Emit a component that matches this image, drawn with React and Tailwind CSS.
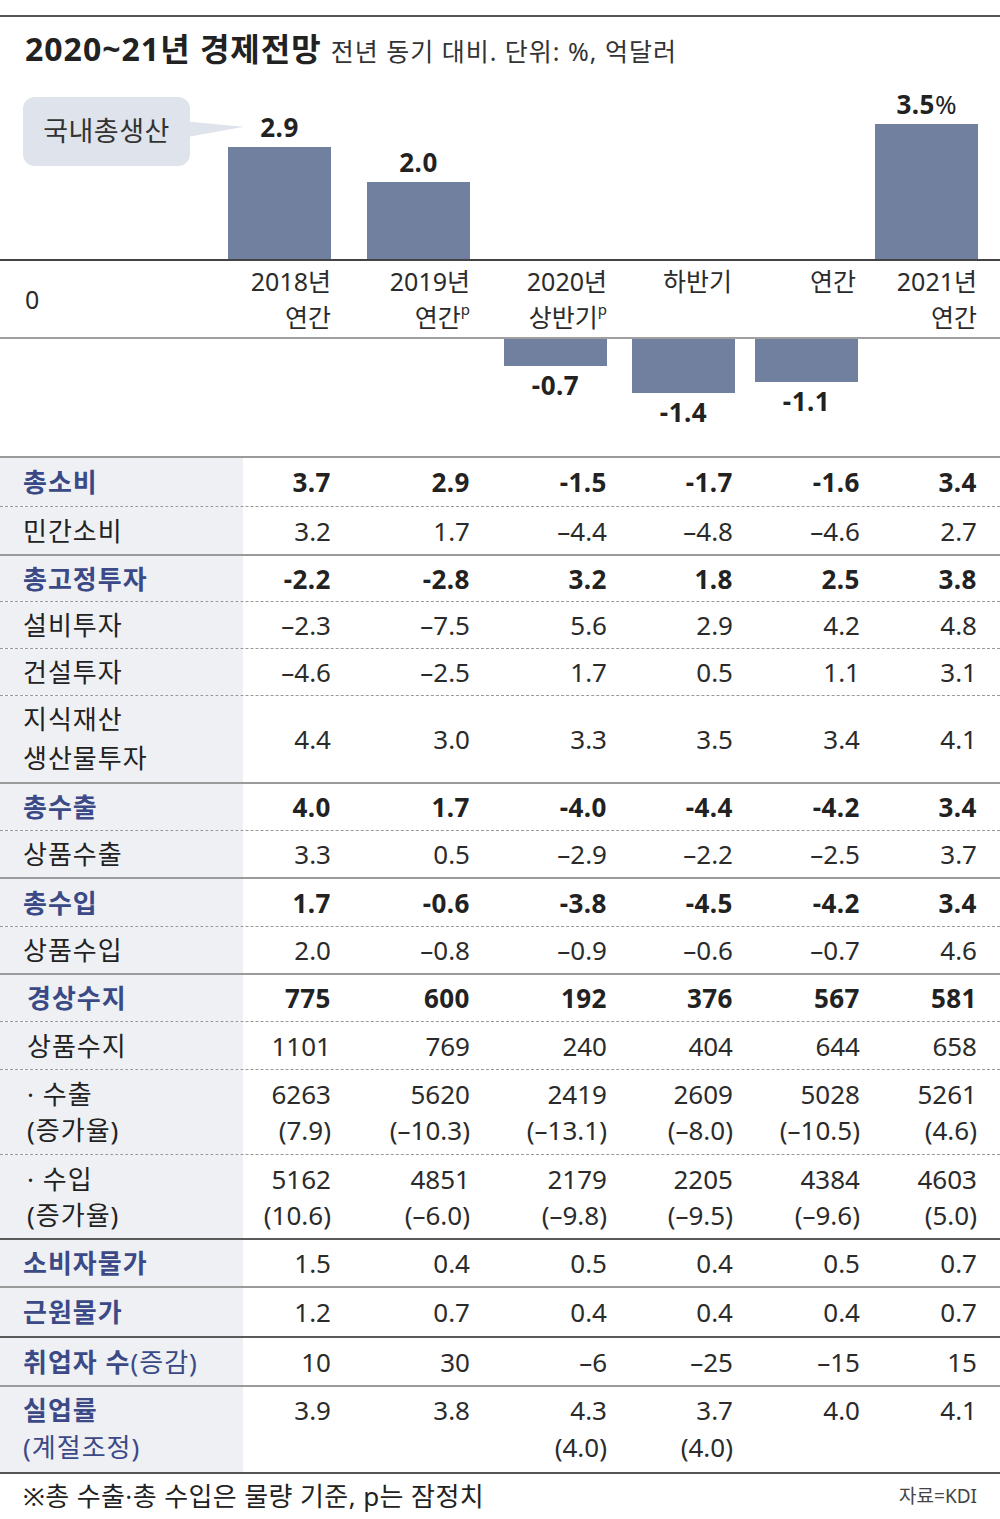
import React from 'react';

// chart bars: value, label, header lines
const bars = [
  { v: 2.9, label: '2.9', top: '2018년', bottom: '연간', pr: '' },
  { v: 2.0, label: '2.0', top: '2019년', bottom: '연간', p: true, pr: '' },
  { v: -0.7, label: '-0.7', top: '2020년', bottom: '상반기', p: true, pr: '' },
  { v: -1.4, label: '-1.4', top: '하반기', bottom: '', pr: 'pr-[3px]' },
  { v: -1.1, label: '-1.1', top: '연간', bottom: '', pr: 'pr-[2px]' },
  { v: 3.5, label: '3.5', pct: true, top: '2021년', bottom: '연간', pr: 'pr-[1px]' },
];

const CHART_COLS = 'grid grid-cols-[228px_103px_139px_137px_128px_123px_120px_22px]';
const TABLE_COLS = 'grid grid-cols-[243px_88px_139px_137px_126px_127px_117px_23px]';

const SOLID = 'border-t-2 border-solid border-[#9a9a9a]';
const DARK = 'border-t-2 border-solid border-[#5a5a5a]';
const DASH = 'border-t border-dashed border-[#9a9a9a]';

const rows = [
  { label: ['총소비'], head: true, vals: ['3.7', '2.9', '-1.5', '-1.7', '-1.6', '3.4'], h: 'h-[50px]', b: SOLID },
  { label: ['민간소비'], vals: ['3.2', '1.7', '–4.4', '–4.8', '–4.6', '2.7'], h: 'h-[48px]', b: DASH },
  { label: ['총고정투자'], head: true, vals: ['-2.2', '-2.8', '3.2', '1.8', '2.5', '3.8'], h: 'h-[47px]', b: SOLID },
  { label: ['설비투자'], vals: ['–2.3', '–7.5', '5.6', '2.9', '4.2', '4.8'], h: 'h-[47px]', b: DASH },
  { label: ['건설투자'], vals: ['–4.6', '–2.5', '1.7', '0.5', '1.1', '3.1'], h: 'h-[47px]', b: DASH },
  { label: ['지식재산', '생산물투자'], wide: true, vals: ['4.4', '3.0', '3.3', '3.5', '3.4', '4.1'], h: 'h-[87px]', b: DASH },
  { label: ['총수출'], head: true, vals: ['4.0', '1.7', '-4.0', '-4.4', '-4.2', '3.4'], h: 'h-[48px]', b: SOLID },
  { label: ['상품수출'], vals: ['3.3', '0.5', '–2.9', '–2.2', '–2.5', '3.7'], h: 'h-[47px]', b: DASH },
  { label: ['총수입'], head: true, vals: ['1.7', '-0.6', '-3.8', '-4.5', '-4.2', '3.4'], h: 'h-[49px]', b: SOLID },
  { label: ['상품수입'], vals: ['2.0', '–0.8', '–0.9', '–0.6', '–0.7', '4.6'], h: 'h-[47px]', b: DASH },
  { label: ['경상수지'], head: true, indent: true, vals: ['775', '600', '192', '376', '567', '581'], h: 'h-[48px]', b: SOLID },
  { label: ['상품수지'], indent: true, vals: ['1101', '769', '240', '404', '644', '658'], h: 'h-[48px]', b: DASH },
  {
    label: ['· 수출', '(증가율)'], indent: true, h: 'h-[85px]', b: DASH,
    vals: [['6263', '(7.9)'], ['5620', '(–10.3)'], ['2419', '(–13.1)'], ['2609', '(–8.0)'], ['5028', '(–10.5)'], ['5261', '(4.6)']],
  },
  {
    label: ['· 수입', '(증가율)'], indent: true, h: 'h-[84px]', b: DASH,
    vals: [['5162', '(10.6)'], ['4851', '(–6.0)'], ['2179', '(–9.8)'], ['2205', '(–9.5)'], ['4384', '(–9.6)'], ['4603', '(5.0)']],
  },
  { label: ['소비자물가'], navy: true, vals: ['1.5', '0.4', '0.5', '0.4', '0.5', '0.7'], h: 'h-[48px]', b: DARK },
  { label: ['근원물가'], navy: true, vals: ['1.2', '0.7', '0.4', '0.4', '0.4', '0.7'], h: 'h-[50px]', b: SOLID },
  { label: ['취업자 수'], navy: true, suffix: '(증감)', vals: ['10', '30', '–6', '–25', '–15', '15'], h: 'h-[49px]', b: DARK },
  {
    label: ['실업률', '(계절조정)'], navy: true, top: true, h: 'h-[87px]', b: SOLID,
    vals: [['3.9'], ['3.8'], ['4.3', '(4.0)'], ['3.7', '(4.0)'], ['4.0'], ['4.1']],
  },
];

const barHeight = (v) => Math.round(Math.abs(v) * 38.7);

const Callout = () => (
  <div className="relative mt-[17px] ml-[23px] w-[167px] h-[69px] rounded-[12px] bg-[#dfe3eb] flex items-center justify-center text-[27px] tracking-[0.5px] text-[#333]">
    국내총생산
    <svg className="absolute left-[166px] top-[22px]" width="56" height="20" viewBox="0 0 56 20">
      <polygon points="0,2.7 55,7.7 0,17.7" fill="#dfe3eb" />
    </svg>
  </div>
);

const BarLabel = ({ b }) => (
  <span className="text-[26px] font-bold leading-none tracking-[0.5px] text-[#222]">
    {b.label}
    {b.pct && <span className="font-normal tracking-normal">%</span>}
  </span>
);

const LabelCell = ({ row }) => {
  const color = row.head || row.navy ? 'text-[#3b4a86]' : 'text-[#222]';
  const lead = row.wide ? 'leading-[39px]' : row.top ? 'leading-[37px]' : 'leading-[36px]';
  return (
    <div
      className={`h-full bg-[#eef0f4] flex flex-col ${row.top ? 'justify-start pt-[5px]' : 'justify-center'} ${row.indent ? 'pl-[27px]' : 'pl-[23px]'} text-[26px] tracking-[1px] ${lead} ${color}`}
    >
      {row.label.map((l, i) => (
        <div key={i} className={(row.head || row.navy) && i === 0 ? 'font-bold' : ''}>
          {l}
          {row.suffix && <span className="font-normal">{row.suffix}</span>}
        </div>
      ))}
    </div>
  );
};

const ValueCell = ({ row, val }) => {
  const lines = Array.isArray(val) ? val : [val];
  return (
    <div
      className={`h-full flex flex-col items-end ${row.top ? 'justify-start pt-[5px] leading-[37px]' : 'justify-center leading-[36px]'} text-[26px] ${row.head ? 'font-bold tracking-[0.5px] text-[#222]' : 'text-[#2b2b2b]'}`}
    >
      {lines.map((l, i) => (
        <div key={i}>{l}</div>
      ))}
    </div>
  );
};

export default function App() {
  return (
    <div className="w-[1000px] h-[1519px] bg-white pt-[15px] font-['Noto_Sans','Noto_Sans_CJK_KR',sans-serif] overflow-hidden">
      <div className="border-t-2 border-[#555]" />

      {/* title */}
      <div className="h-[63px] flex items-center pl-[25px]">
        <span>
          <span className="text-[32px] font-bold tracking-[1px] text-[#222]">2020~21년 경제전망</span>
          <span className="ml-[9px] text-[25px] tracking-[1px] text-[#333]">전년 동기 대비. 단위: %, 억달러</span>
        </span>
      </div>

      {/* positive bars */}
      <div className={`${CHART_COLS} h-[179px] items-end`}>
        <div className="self-start">
          <Callout />
        </div>
        {bars.map((b, i) => (
          <div key={i} className="flex justify-end">
            <div className="w-[103px] flex flex-col items-center">
              {b.v > 0 && (
                <>
                  <div className="mb-[4px]">
                    <BarLabel b={b} />
                  </div>
                  <div className="w-full bg-[#71809f]" style={{ height: barHeight(b.v) }} />
                </>
              )}
            </div>
          </div>
        ))}
        <div />
      </div>

      {/* axis labels */}
      <div className={`${CHART_COLS} h-[80px] border-t-2 border-[#444] border-b-2 border-b-[#a0a0a0] items-center text-[25px] leading-[36px] text-[#2b2b2b]`}>
        <div className="pl-[25px]">0</div>
        {bars.map((b, i) => (
          <div key={i} className={`flex flex-col items-end ${b.pr}`}>
            <div>{b.top}</div>
            <div className="h-[36px]">
              {b.bottom}
              {b.p && <span className="relative top-[3px] align-top text-[15px] leading-none">p</span>}
            </div>
          </div>
        ))}
        <div />
      </div>

      {/* negative bars */}
      <div className={`${CHART_COLS} h-[117px] items-start`}>
        <div />
        {bars.map((b, i) => (
          <div key={i} className="flex justify-end">
            <div className="w-[103px] flex flex-col items-center">
              {b.v < 0 && (
                <>
                  <div className="w-full bg-[#71809f]" style={{ height: barHeight(b.v) }} />
                  <div className="mt-[6px]">
                    <BarLabel b={b} />
                  </div>
                </>
              )}
            </div>
          </div>
        ))}
        <div />
      </div>

      {/* table */}
      {rows.map((row, ri) => (
        <div key={ri} className={`${TABLE_COLS} ${row.h} ${row.b}`}>
          <LabelCell row={row} />
          {row.vals.map((v, vi) => (
            <ValueCell key={vi} row={row} val={v} />
          ))}
          <div />
        </div>
      ))}

      {/* footer */}
      <div className="h-[47px] border-t-2 border-[#555] flex items-center justify-between pl-[23px] pr-[23px]">
        <span className="text-[26px] tracking-[0.4px] text-[#222]">※총 수출·총 수입은 물량 기준, p는 잠정치</span>
        <span className="text-[19px] text-[#444]">자료=KDI</span>
      </div>
    </div>
  );
}
